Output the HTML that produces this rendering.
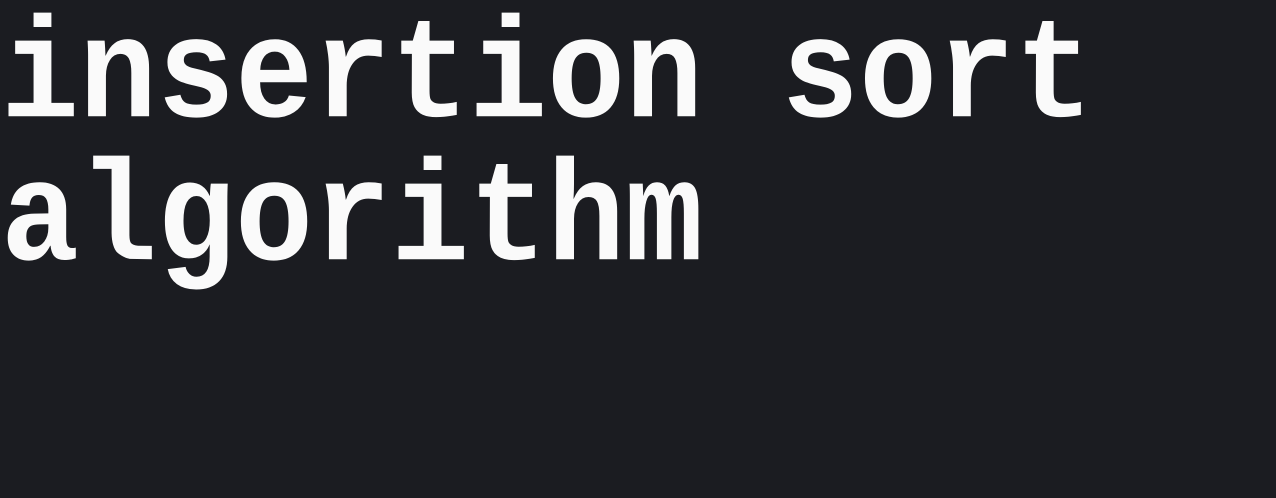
<!DOCTYPE html>
<html><head><style>
html,body{margin:0;padding:0;background:#1b1c21;width:1276px;height:498px;overflow:hidden}
.t{position:absolute;left:1px;font-family:"Liberation Mono",monospace;font-weight:bold;font-size:130px;line-height:143px;color:#fafafa;white-space:pre;transform:scaleY(1.1);transform-origin:0 100%}
</style></head><body>
<div class="t" style="top:15px">insertion sort</div>
<div class="t" style="top:158px">algorithm</div>
</body></html>
